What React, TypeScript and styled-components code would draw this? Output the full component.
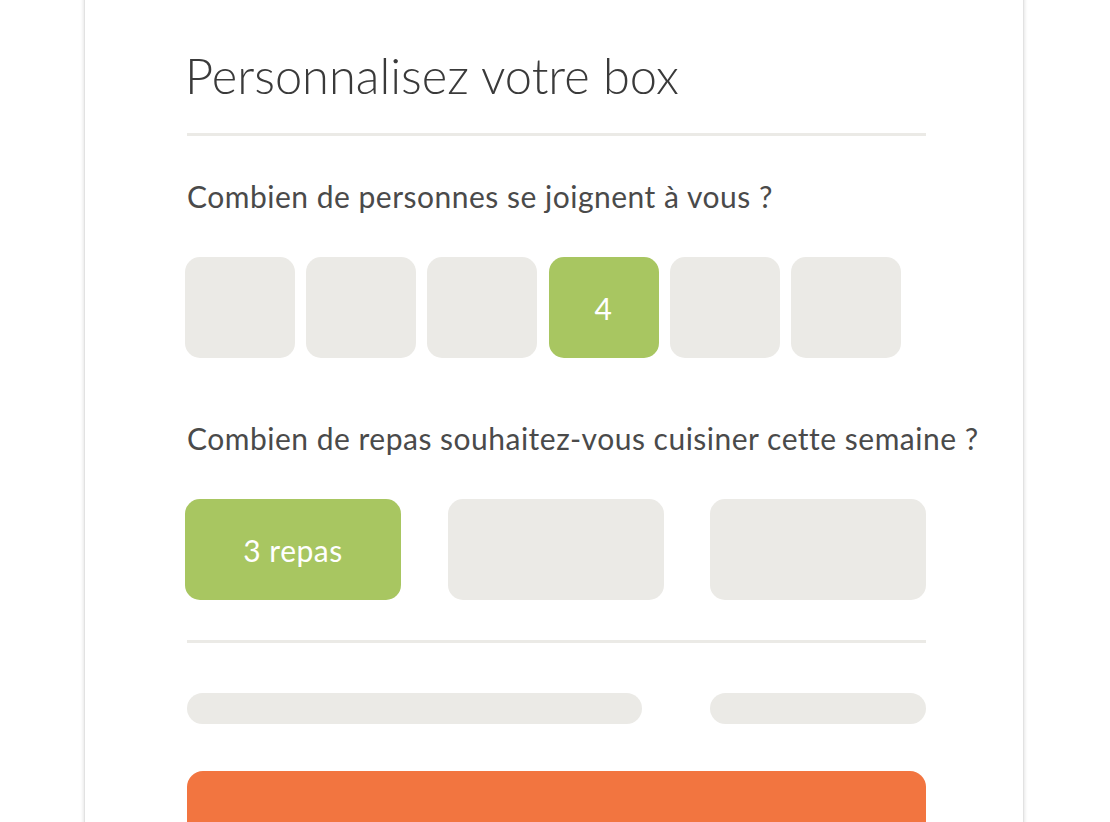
import { createGlobalStyle, styled } from "styled-components";

const GlobalStyle = createGlobalStyle`
  html, body {
    margin: 0;
    padding: 0;
    background: #ffffff;
  }
  body {
    font-family: Lato, "Open Sans", sans-serif;
    color: #444444;
    overflow: hidden;
  }
`;

const Page = styled.div`
  width: 1110px;
  height: 822px;
  overflow: hidden;
`;

const Card = styled.div`
  box-sizing: border-box;
  width: 940px;
  margin: -20px 0 0 84px;
  padding: 20px 97px 80px 100px;
  background: #ffffff;
  border-left: 1px solid #e2e2e2;
  border-right: 1px solid #e2e2e2;
  box-shadow: 0 0 4px rgba(0, 0, 0, 0.15);
`;

const Title = styled.h1`
  margin: 45px 0 28px 0;
  font-weight: 300;
  font-size: 48.8px;
  line-height: 60px;
  color: #3a3a3a;
`;

const Divider = styled.hr<{ $top?: number }>`
  margin: ${(p) => p.$top ?? 0}px 0 0 2px;
  border: 0;
  height: 3px;
  background: #ebeae6;
`;

const Question = styled.p<{ $top: number }>`
  margin: ${(p) => p.$top}px 0 0 2px;
  font-size: 30px;
  letter-spacing: 0.5px;
  line-height: 36px;
  color: #4a4a4a;
  white-space: nowrap;
`;

const Options = styled.div<{ $cols: number; $gap: number; $w: number }>`
  display: grid;
  grid-template-columns: repeat(${(p) => p.$cols}, ${(p) => p.$w}px);
  column-gap: ${(p) => p.$gap}px;
  margin-top: 43px;
`;

const Option = styled.div<{ $active?: boolean }>`
  height: 101px;
  border-radius: 15px;
  background: ${(p) => (p.$active ? "#a8c661" : "#ebeae6")};
  color: #ffffff;
  display: flex;
  align-items: center;
  justify-content: center;
  font-size: 30px;
  letter-spacing: 0.5px;
`;

const Skeletons = styled.div`
  display: flex;
  justify-content: space-between;
  margin: 50px 0 0 2px;
`;

const Bar = styled.div<{ $w: number }>`
  width: ${(p) => p.$w}px;
  height: 31px;
  border-radius: 16px;
  background: #ebeae6;
`;

const Cta = styled.button`
  display: block;
  width: 739px;
  height: 100px;
  margin: 47px 0 0 2px;
  border: 0;
  border-radius: 16px;
  background: #f27540;
`;

export default function App() {
  return (
    <Page>
      <GlobalStyle />
      <Card>
        <Title>Personnalisez votre box</Title>
        <Divider />
        <Question $top={42}>Combien de personnes se joignent à vous ?</Question>
        <Options $cols={6} $gap={11.2} $w={110}>
          {[1, 2, 3, 4, 5, 6].map((n) => (
            <Option key={n} $active={n === 4}>
              {n === 4 ? "4" : ""}
            </Option>
          ))}
        </Options>
        <Question $top={62}>Combien de repas souhaitez-vous cuisiner cette semaine ?</Question>
        <Options $cols={3} $gap={46.5} $w={216}>
          <Option $active>3 repas</Option>
          <Option />
          <Option />
        </Options>
        <Divider $top={40} />
        <Skeletons>
          <Bar $w={455} />
          <Bar $w={216} />
        </Skeletons>
        <Cta />
      </Card>
    </Page>
  );
}
